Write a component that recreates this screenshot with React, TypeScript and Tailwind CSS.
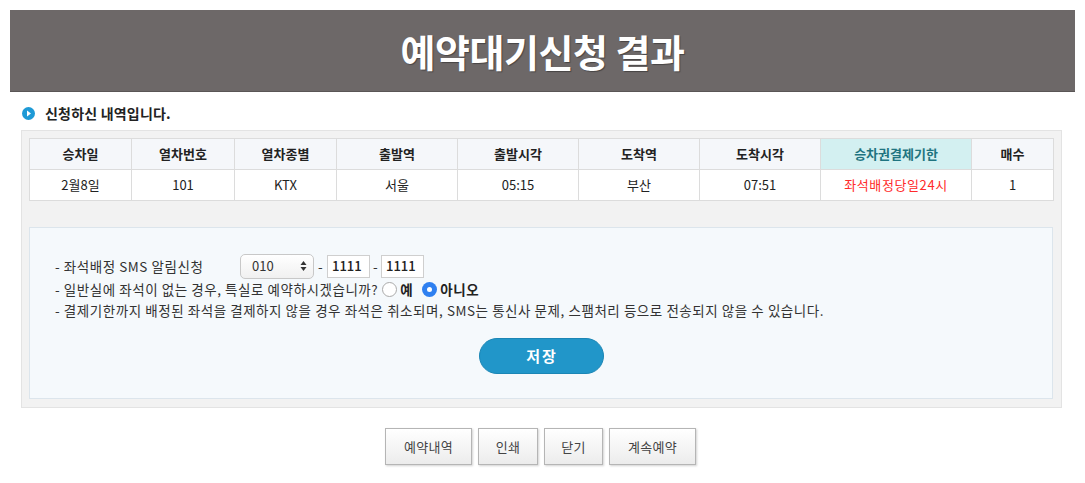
import React from "react";

const cols = [
  { h: "승차일", v: "2월8일", w: "w-[102px]" },
  { h: "열차번호", v: "101", w: "w-[103px]" },
  { h: "열차종별", v: "KTX", w: "w-[102px]" },
  { h: "출발역", v: "서울", w: "w-[121px]" },
  { h: "출발시각", v: "05:15", w: "w-[121px]" },
  { h: "도착역", v: "부산", w: "w-[121px]" },
  { h: "도착시각", v: "07:51", w: "w-[121px]" },
  { h: "승차권결제기한", v: "좌석배정당일24시", w: "w-[151px]", hl: true },
  { h: "매수", v: "1", w: "w-[82px]" },
];

function SmallBtn({ label, w }: { label: string; w: string }) {
  return (
    <button
      className={`${w} h-[37px] border border-[#b5b5b5] bg-gradient-to-b from-white to-[#ececec] text-[13px] tracking-[0.3px] text-[#444] shadow-[1px_1px_2px_rgba(0,0,0,0.18)]`}
    >
      {label}
    </button>
  );
}

export default function App() {
  return (
    <div
      className="w-[1085px] h-[483px] bg-white pt-[10px] text-[#333]"
      style={{ fontFamily: '"Noto Sans CJK KR", "Noto Sans", sans-serif' }}
    >
      <div className="mx-[10px] h-[82px] bg-[#6d6868] flex items-center justify-center border-b border-[#5a5656]">
        <h1 className="text-[38px] font-bold text-white tracking-[-0.5px] leading-none [text-shadow:1px_1px_1px_rgba(0,0,0,0.35)]">
          예약대기신청 결과
        </h1>
      </div>

      <div className="ml-[22px] mt-[12px] h-[19px] flex items-center gap-[10px]">
        <svg width="13" height="13" viewBox="0 0 13 13">
          <circle cx="6.5" cy="6.5" r="6.5" fill="#1e9ad6" />
          <path d="M5 3.6 L9 6.5 L5 9.4 Z" fill="#fff" />
        </svg>
        <span className="text-[14px] font-bold text-[#222] tracking-[0.2px]">신청하신 내역입니다.</span>
      </div>

      <div className="ml-[21px] mt-[7px] w-[1041px] border border-[#e3e3e3] bg-[#f2f2f2] pt-[7px] pl-[7px] pr-[8px] pb-[8px]">
        <table className="border-collapse table-fixed w-[1024px] bg-white">
          <thead>
            <tr className="h-[31px]">
              {cols.map((c) => (
                <th
                  key={c.h}
                  className={`${c.w} border border-[#dcdcdc] text-[13px] font-bold ${
                    c.hl ? "bg-[#d3f0f1] text-[#1f7480]" : "bg-[#f5f7fa] text-[#222]"
                  }`}
                >
                  {c.h}
                </th>
              ))}
            </tr>
          </thead>
          <tbody>
            <tr className="h-[31px]">
              {cols.map((c) => (
                <td
                  key={c.h}
                  className={`border border-[#dcdcdc] text-center text-[13px] ${
                    c.hl ? "text-[#ff2a2a] tracking-[0.6px]" : "text-[#222]"
                  }`}
                >
                  {c.v}
                </td>
              ))}
            </tr>
          </tbody>
        </table>

        <div className="mt-[26px] border border-[#dce5ec] bg-[#f5f9fc] pt-[25px] pl-[25px] pb-[24px] text-[13.5px] tracking-[0.55px] text-[#333]">
          <div className="h-[26px] flex items-center">
            <span className="w-[185px]">- 좌석배정 SMS 알림신청</span>
            <div className="w-[74px] h-[25px] rounded-[5px] border border-[#c8c8c8] bg-gradient-to-b from-white to-[#f0f0f0] flex items-center justify-between pl-[11px] pr-[6px] text-[13px] tracking-normal">
              <span>010</span>
              <svg width="7" height="12" viewBox="0 0 7 12">
                <path d="M3.5 1 L6.5 5 L0.5 5 Z" fill="#333" />
                <path d="M3.5 11 L6.5 7 L0.5 7 Z" fill="#333" />
              </svg>
            </div>
            <span className="w-[13px] text-center">-</span>
            <div className="w-[43px] h-[23px] border border-[#cfcfcf] bg-white flex items-center pl-[4px] text-[13px] font-medium tracking-normal text-[#222]">
              1111
            </div>
            <span className="w-[11px] text-center">-</span>
            <div className="w-[43px] h-[23px] border border-[#cfcfcf] bg-white flex items-center pl-[4px] text-[13px] font-medium tracking-normal text-[#222]">
              1111
            </div>
          </div>
          <div className="h-[20px] flex items-center">
            <span>- 일반실에 좌석이 없는 경우, 특실로 예약하시겠습니까?</span>
            <span className="ml-[4px] w-[15px] h-[15px] rounded-full border border-[#aaa] bg-white"></span>
            <span className="ml-[3px] font-bold text-[#222] text-[13.5px]">예</span>
            <span className="ml-[9px] w-[15px] h-[15px] rounded-full bg-[#2f80f0] flex items-center justify-center">
              <span className="w-[5px] h-[5px] rounded-full bg-white"></span>
            </span>
            <span className="ml-[3px] font-bold text-[#222] text-[13.5px]">아니오</span>
          </div>
          <div className="h-[22px] flex items-center">
            - 결제기한까지 배정된 좌석을 결제하지 않을 경우 좌석은 취소되며, SMS는 통신사 문제, 스팸처리 등으로 전송되지 않을 수 있습니다.
          </div>
          <div className="mt-[17px] flex justify-center pr-[25px]">
            <button className="w-[125px] h-[36px] rounded-full bg-[#2196c9] border border-[#1b86b5] text-white text-[15px] font-bold tracking-[2px] pl-[2px]">
              저장
            </button>
          </div>
        </div>
      </div>

      <div className="mt-[20px] flex justify-center gap-[6px] pr-[4px]">
        <SmallBtn label="예약내역" w="w-[87px]" />
        <SmallBtn label="인쇄" w="w-[60px]" />
        <SmallBtn label="닫기" w="w-[59px]" />
        <SmallBtn label="계속예약" w="w-[87px]" />
      </div>
    </div>
  );
}
